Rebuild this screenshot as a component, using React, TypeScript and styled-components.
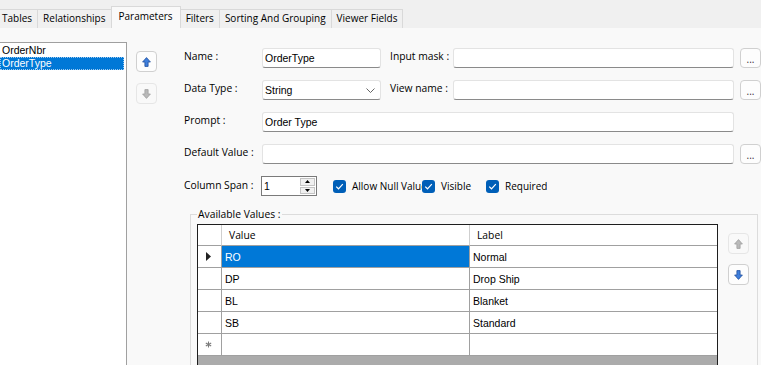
import React from 'react';
import styled, { createGlobalStyle, css } from 'styled-components';

const UI = `'Open Sans', 'Noto Sans', sans-serif`;
const CLASSIC = `'Liberation Sans', Arial, sans-serif`;

const GlobalStyle = createGlobalStyle`
	*, *::before, *::after {
		box-sizing: border-box;
	}
	html, body {
		margin: 0;
		padding: 0;
		background: #f9f9f9;
	}
`;

const Page = styled.div`
	width: 761px;
	height: 365px;
	overflow: hidden;
	background: #f9f9f9;
	display: flex;
	flex-direction: column;
`;

const TabStrip = styled.div`
	height: 28px;
	flex: none;
	display: flex;
	align-items: flex-end;
	background: #f0f0f0;
	margin-left: -4px;
`;

const Tab = styled.div<{ $active?: boolean }>`
	font: 10px ${UI};
	color: #000;
	height: 19px;
	line-height: 17px;
	padding: 0 5px;
	margin-right: -1px;
	border: 1px solid #d9d9d9;
	border-bottom: none;
	background: #f0f0f0;
	white-space: nowrap;

	${(p) =>
		p.$active &&
		css`
			height: 22px;
			line-height: 19px;
			padding: 0 7px;
			background: #f9f9f9;
		`}
`;

const Body = styled.div`
	flex: 1;
	display: flex;
	padding-top: 14px;
	min-height: 0;
`;

const ListBox = styled.div`
	width: 128px;
	height: 340px;
	margin-left: -1px;
	flex: none;
	background: #fff;
	border: 1px solid #a0a0a0;
	padding-top: 1px;
`;

const ListItem = styled.div<{ $selected?: boolean }>`
	font: 10.5px ${CLASSIC};
	line-height: 13px;
	height: 13px;
	padding-left: 2px;
	margin-right: 2px;
	color: #000;

	${(p) =>
		p.$selected &&
		css`
			background: #0078d7;
			color: #fff;
			outline: 1px dotted #9cc9f0;
			outline-offset: -1px;
		`}
`;

const ArrowColumn = styled.div<{ $top: number; $gap: number; $left: number }>`
	display: flex;
	flex-direction: column;
	gap: ${(p) => p.$gap}px;
	padding-top: ${(p) => p.$top}px;
	margin-left: ${(p) => p.$left}px;
	flex: none;
`;

const SideButton = styled.div<{ $disabled?: boolean }>`
	width: 21px;
	height: 21px;
	display: flex;
	align-items: center;
	justify-content: center;
	border-radius: 4px;
	background: ${(p) => (p.$disabled ? '#f9f9f9' : '#fdfdfd')};
	border: 1px solid ${(p) => (p.$disabled ? '#e6e6e6' : '#d0d0d0')};
`;

const Form = styled.div`
	width: 577px;
	margin-left: 27px;
	padding-top: 6px;
	display: flex;
	flex-direction: column;
	gap: 12px;
	flex: none;
`;

const Row = styled.div`
	display: flex;
	align-items: flex-start;
	height: 20px;
`;

const Label = styled.div<{ $width: number; $gap?: number; $top?: number }>`
	font: 10.3px ${UI};
	line-height: 16px;
	color: #000;
	width: ${(p) => p.$width}px;
	margin-left: ${(p) => p.$gap ?? 0}px;
	margin-top: ${(p) => p.$top ?? 0}px;
	white-space: nowrap;
	flex: none;
`;

const TextBox = styled.div<{ $width?: number }>`
	${(p) =>
		p.$width
			? css`
					width: ${p.$width}px;
					flex: none;
				`
			: css`
					flex: 1;
				`}
	height: 20px;
	background: #fff;
	border: 1px solid #e3e3e3;
	border-bottom-color: #8a8a8a;
	border-radius: 3px;
	font: 10.5px ${CLASSIC};
	line-height: 19px;
	padding: 0 2px;
	color: #000;
	display: flex;
	align-items: center;
	justify-content: space-between;
`;

const Chevron = styled.svg`
	margin-right: 3px;
`;

const EllipsisButton = styled.div`
	width: 21px;
	height: 20px;
	margin-left: 6px;
	flex: none;
	border: 1px solid #d0d0d0;
	border-radius: 4px;
	background: #fdfdfd;
	font: 10px ${UI};
	line-height: 20px;
	text-align: center;
	color: #3a2a3a;
`;

const EndSpacer = styled.div`
	width: 27px;
	flex: none;
`;

const Spin = styled.div`
	width: 56px;
	height: 20px;
	flex: none;
	display: flex;
	background: #fff;
	border: 1px solid #7a7a7a;
	font: 10.5px ${CLASSIC};
	line-height: 18px;
	padding: 0 1px 0 2px;
`;

const SpinValue = styled.div`
	flex: 1;
`;

const SpinButtons = styled.div`
	width: 15px;
	display: flex;
	flex-direction: column;
	gap: 1px;
	padding: 1px 0;
`;

const SpinPart = styled.div`
	flex: 1;
	display: flex;
	align-items: center;
	justify-content: center;
	background: #f0f0f0;
	border: 1px solid #c4c4c4;
`;

const CheckItem = styled.div<{ $width?: number; $gap?: number }>`
	display: flex;
	align-items: center;
	gap: 6px;
	height: 20px;
	margin-left: ${(p) => p.$gap ?? 0}px;
	flex: none;
	overflow: hidden;
	${(p) =>
		p.$width &&
		css`
			width: ${p.$width}px;
		`}
`;

const CheckBox = styled.div`
	width: 13px;
	height: 13px;
	flex: none;
	border-radius: 3px;
	background: #005fb8;
	display: flex;
	align-items: center;
	justify-content: center;
`;

const CheckText = styled.span`
	font: 10px ${UI};
	color: #000;
	white-space: nowrap;
`;

const Group = styled.fieldset`
	margin: 0 3px 0 6px;
	padding: 4px 0 0 6px;
	border: 1px solid #dcdcdc;
	min-width: 0;
	height: 200px;
`;

const Legend = styled.legend`
	font: 10.3px ${UI};
	line-height: 12px;
	padding: 0 1px;
	margin: 0;
	color: #000;
`;

const GroupInner = styled.div`
	display: flex;
`;

const GridBox = styled.div`
	width: 521px;
	height: 160px;
	flex: none;
	border: 1px solid #1e1e1e;
	background: #ababab;
`;

const GridRow = styled.div<{ $header?: boolean }>`
	display: grid;
	grid-template-columns: 24px 248px 1fr;
	height: ${(p) => (p.$header ? 21 : 22)}px;
	background: #fff;
`;

const Cell = styled.div<{ $header?: boolean; $selected?: boolean; $last?: boolean }>`
	border-bottom: 1px solid #a0a0a0;
	border-right: ${(p) => (p.$last ? 'none' : `1px solid ${p.$header ? '#cfcfcf' : '#a0a0a0'}`)};
	font: 10.5px ${CLASSIC};
	color: #000;
	padding-left: 3px;
	display: flex;
	align-items: center;
	white-space: nowrap;
	overflow: hidden;

	${(p) =>
		p.$header &&
		css`
			font: 10.3px ${UI};
			padding-left: 7px;
			padding-bottom: 1px;
		`}

	${(p) =>
		p.$selected &&
		css`
			background: #0078d7;
			color: #fff;
		`}
`;

const RowHeaderCell = styled.div`
	border-bottom: 1px solid #a0a0a0;
	border-right: 1px solid #a0a0a0;
	display: flex;
	align-items: center;
	justify-content: center;
	padding-right: 2px;
`;

const ArrowIcon = ({ dir, disabled }: { dir: 'up' | 'down'; disabled?: boolean }) => (
	<svg width="9" height="10" viewBox="0 0 9 10">
		<path
			d={
				dir === 'up'
					? 'M4.5 0.6 L8.4 5 H6.1 V9.4 H2.9 V5 H0.6 Z'
					: 'M4.5 9.4 L8.4 5 H6.1 V0.6 H2.9 V5 H0.6 Z'
			}
			fill={disabled ? '#b9b9b9' : '#3f7fdc'}
			stroke={disabled ? '#a0a0a0' : '#1f4f9e'}
			strokeWidth="0.8"
			strokeLinejoin="round"
		/>
	</svg>
);

const CheckMark = () => (
	<svg width="9" height="7" viewBox="0 0 9 7">
		<path d="M1.2 3.6 L3.5 5.8 L7.8 1.2" fill="none" stroke="#fff" strokeWidth="1.2" />
	</svg>
);

const tabs = ['Tables', 'Relationships', 'Parameters', 'Filters', 'Sorting And Grouping', 'Viewer Fields'];

const values = [
	{ value: 'RO', label: 'Normal' },
	{ value: 'DP', label: 'Drop Ship' },
	{ value: 'BL', label: 'Blanket' },
	{ value: 'SB', label: 'Standard' },
];

const App = () => (
	<Page>
		<GlobalStyle />
		<TabStrip>
			{tabs.map((t) => (
				<Tab key={t} $active={t === 'Parameters'}>
					{t}
				</Tab>
			))}
		</TabStrip>
		<Body>
			<ListBox>
				<ListItem>OrderNbr</ListItem>
				<ListItem $selected>OrderType</ListItem>
			</ListBox>

			<ArrowColumn $top={9} $gap={11} $left={9}>
				<SideButton>
					<ArrowIcon dir="up" />
				</SideButton>
				<SideButton $disabled>
					<ArrowIcon dir="down" disabled />
				</SideButton>
			</ArrowColumn>

			<Form>
				<Row>
					<Label $width={78}>Name :</Label>
					<TextBox $width={119}>OrderType</TextBox>
					<Label $width={63} $gap={9}>
						Input mask :
					</Label>
					<TextBox />
					<EllipsisButton>...</EllipsisButton>
				</Row>
				<Row>
					<Label $width={78}>Data Type :</Label>
					<TextBox $width={119}>
						String
						<Chevron width="9" height="5" viewBox="0 0 9 5">
							<polyline points="0.5,0.5 4.5,4.5 8.5,0.5" fill="none" stroke="#555" strokeWidth="0.9" />
						</Chevron>
					</TextBox>
					<Label $width={63} $gap={9}>
						View name :
					</Label>
					<TextBox />
					<EllipsisButton>...</EllipsisButton>
				</Row>
				<Row>
					<Label $width={78}>Prompt :</Label>
					<TextBox>Order Type</TextBox>
					<EndSpacer />
				</Row>
				<Row>
					<Label $width={78}>Default Value :</Label>
					<TextBox />
					<EllipsisButton>...</EllipsisButton>
				</Row>
				<Row>
					<Label $width={77} $top={1}>
						Column Span :
					</Label>
					<Spin>
						<SpinValue>1</SpinValue>
						<SpinButtons>
							<SpinPart>
								<svg width="5" height="3" viewBox="0 0 5 3">
									<path d="M2.5 0 L5 3 H0 Z" fill="#000" />
								</svg>
							</SpinPart>
							<SpinPart>
								<svg width="5" height="3" viewBox="0 0 5 3">
									<path d="M0 0 H5 L2.5 3 Z" fill="#000" />
								</svg>
							</SpinPart>
						</SpinButtons>
					</Spin>
					<CheckItem $gap={16} $width={89}>
						<CheckBox>
							<CheckMark />
						</CheckBox>
						<CheckText>Allow Null Value</CheckText>
					</CheckItem>
					<CheckItem $width={64}>
						<CheckBox>
							<CheckMark />
						</CheckBox>
						<CheckText>Visible</CheckText>
					</CheckItem>
					<CheckItem>
						<CheckBox>
							<CheckMark />
						</CheckBox>
						<CheckText>Required</CheckText>
					</CheckItem>
				</Row>

				<Group>
					<Legend>Available Values :</Legend>
					<GroupInner>
						<GridBox>
							<GridRow $header>
								<Cell $header />
								<Cell $header>Value</Cell>
								<Cell $header $last>
									Label
								</Cell>
							</GridRow>
							{values.map((v, i) => (
								<GridRow key={v.value}>
									<RowHeaderCell>
										{i === 0 && (
											<svg width="5" height="9" viewBox="0 0 5 9">
												<path d="M0 0 L5 4.5 L0 9 Z" fill="#222" />
											</svg>
										)}
									</RowHeaderCell>
									<Cell $selected={i === 0}>{v.value}</Cell>
									<Cell $last>{v.label}</Cell>
								</GridRow>
							))}
							<GridRow>
								<RowHeaderCell>
									<svg width="7" height="7" viewBox="0 0 7 7">
										<g stroke="#7a7a7a" strokeWidth="1.1">
											<line x1="3.5" y1="0.5" x2="3.5" y2="6.5" />
											<line x1="0.8" y1="2" x2="6.2" y2="5" />
											<line x1="0.8" y1="5" x2="6.2" y2="2" />
										</g>
									</svg>
								</RowHeaderCell>
								<Cell />
								<Cell $last />
							</GridRow>
						</GridBox>

						<ArrowColumn $top={9} $gap={10} $left={10}>
							<SideButton $disabled>
								<ArrowIcon dir="up" disabled />
							</SideButton>
							<SideButton>
								<ArrowIcon dir="down" />
							</SideButton>
						</ArrowColumn>
					</GroupInner>
				</Group>
			</Form>
		</Body>
	</Page>
);

export default App;
